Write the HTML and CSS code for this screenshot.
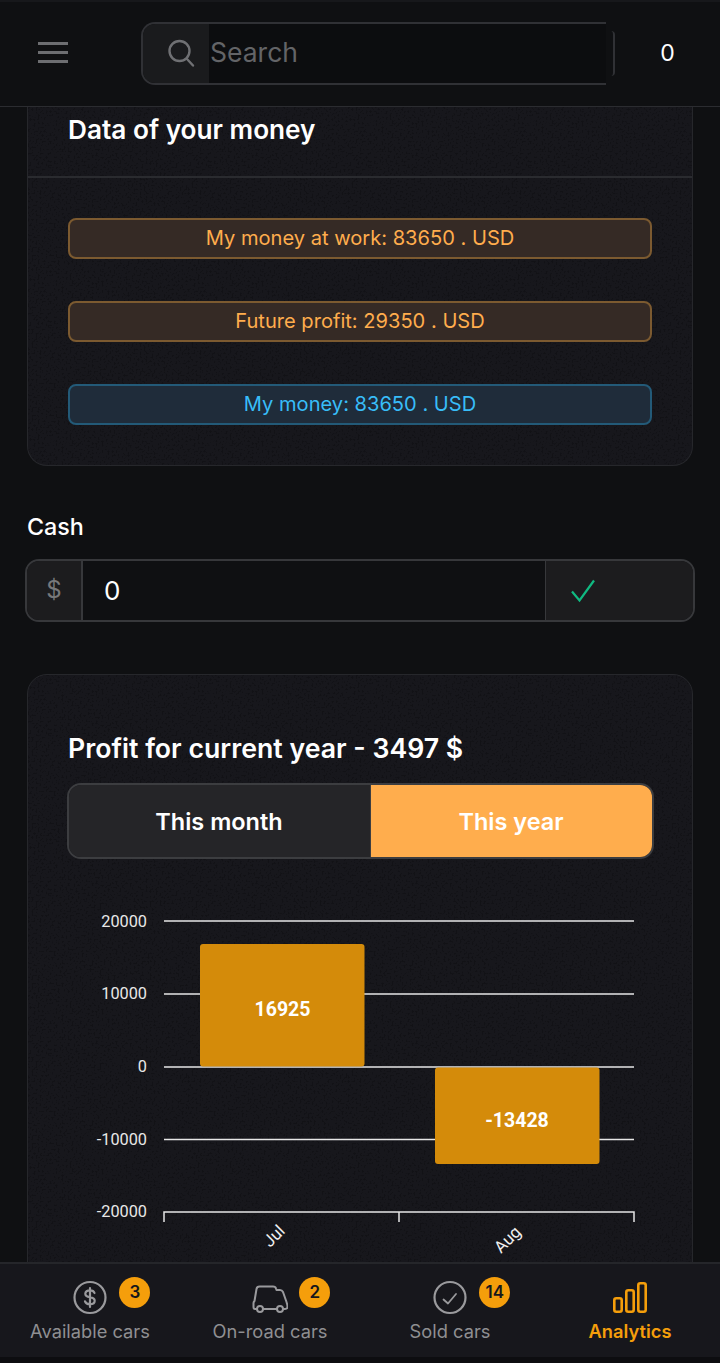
FILE: index.html
```html
<!DOCTYPE html>
<html>
	<head>
		<meta charset="utf-8">
		<title>Analytics</title>
		<link rel="stylesheet" href="styles.css">
	</head>
	<body>
		<div class="topBar">
			<button class="burger" aria-label="Menu">
				<span></span><span></span><span></span>
			</button>
			<div class="search">
				<div class="searchIcon">
					<svg width="30" height="30" viewBox="0 0 30 30" fill="none" stroke="#6f7073" stroke-width="2.4" stroke-linecap="round">
						<circle cx="13.5" cy="13" r="10"/>
						<path d="M21 21l6 6.5"/>
					</svg>
				</div>
				<div class="searchText">Search</div>
			</div>
			<div class="searchEnd"></div>
			<div class="balance">0</div>
		</div>

		<div class="content">
			<!--Money summary, scrolled partly under the top bar-->
			<div class="card moneyCard">
				<h2 class="moneyTitle">Data of your money</h2>
				<div class="pills">
					<div class="pill orange">My money at work: 83650 . USD</div>
					<div class="pill orange">Future profit: 29350 . USD</div>
					<div class="pill blue">My money: 83650 . USD</div>
				</div>
			</div>

			<label class="cashLabel">Cash</label>
			<div class="cashField">
				<div class="cashPrefix">$</div>
				<div class="cashValue">0</div>
				<div class="cashApply">
					<svg width="26" height="24" viewBox="0 0 26 24" fill="none" stroke="#10b981" stroke-width="2.2">
						<path d="M2 12.5l7.5 9L24 1.5"/>
					</svg>
				</div>
			</div>

			<div class="card profitCard">
				<h2 class="profitTitle">Profit for current year - 3497 $</h2>
				<div class="tabs">
					<div class="tab month">This month</div>
					<div class="tab year">This year</div>
				</div>
				<svg class="chart" width="666" height="400" viewBox="27 880 666 400">
					<g class="grid">
						<path d="M164 921H634M164 994H634M164 1067H634M164 1139.500H634"/>
						<path d="M164 1222V1212H634V1222M399 1212V1222"/>
					</g>
					<g class="yLabels">
						<text x="147" y="926.500">20000</text>
						<text x="147" y="999">10000</text>
						<text x="147" y="1072">0</text>
						<text x="147" y="1144.500">-10000</text>
						<text x="147" y="1217">-20000</text>
					</g>
					<rect class="bar" x="200" y="944" width="164.500" height="122.500" rx="3"/>
					<rect class="bar" x="435" y="1067.500" width="164.500" height="96.500" rx="3"/>
					<text class="barLabel" x="282.500" y="1016">16925</text>
					<text class="barLabel" x="517" y="1127">-13428</text>
					<text class="xLabel" transform="translate(286 1232) rotate(-45)">Jul</text>
					<text class="xLabel" transform="translate(522 1233) rotate(-45)">Aug</text>
				</svg>
			</div>
		</div>

		<div class="bottomNav">
			<div class="navItem">
				<div class="navIcon">
					<svg width="36" height="36" viewBox="0 0 36 36" fill="none" stroke="#9a9a9d" stroke-width="2.2">
						<circle cx="18" cy="17.500" r="15.500"/>
						<path stroke-linecap="round" d="M22.500 13c-.6-1.800-2.400-2.700-4.500-2.700-2.800 0-4.700 1.400-4.700 3.400 0 2.100 1.900 3 4.700 3.500s4.700 1.500 4.700 3.600c0 2-2 3.400-4.700 3.400-2.500 0-4.400-1-5-2.900M18 8v19"/>
					</svg>
					<span class="badge">3</span>
				</div>
				<div class="navText">Available cars</div>
			</div>
			<div class="navItem">
				<div class="navIcon">
					<svg width="36" height="36" viewBox="0 0 36 36" fill="none" stroke="#9a9a9d" stroke-width="2" stroke-linejoin="round">
						<path d="M5 29H3Q1.500 29 1.500 27V23Q1.500 22 2.500 21L4.500 9Q5 6.500 7.500 6.500H21Q23.500 6.500 24 8.500L24.500 10H28Q30 10 31 12L34.500 22Q35.500 25 35.500 27Q35.500 29 33 29H31M11 29H25"/>
						<circle cx="8" cy="29" r="3"/>
						<circle cx="28" cy="29" r="3"/>
					</svg>
					<span class="badge">2</span>
				</div>
				<div class="navText">On-road cars</div>
			</div>
			<div class="navItem">
				<div class="navIcon">
					<svg width="36" height="36" viewBox="0 0 36 36" fill="none" stroke="#9a9a9d" stroke-width="2.2">
						<circle cx="18" cy="17.500" r="15.500"/>
						<path stroke-width="1.800" stroke-linecap="round" stroke-linejoin="round" d="M11.500 19.500l4.500 4 8-9.500"/>
					</svg>
					<span class="badge">14</span>
				</div>
				<div class="navText">Sold cars</div>
			</div>
			<div class="navItem active">
				<div class="navIcon">
					<svg width="36" height="36" viewBox="0 0 36 36" fill="none" stroke="#f59e0b" stroke-width="2.600">
						<rect x="2.300" y="18.300" width="7.400" height="13.400" rx="2"/>
						<rect x="14.300" y="10.300" width="7.400" height="21.400" rx="2"/>
						<rect x="26.300" y="3.300" width="7.400" height="28.400" rx="2"/>
					</svg>
				</div>
				<div class="navText">Analytics</div>
			</div>
		</div>
		<div class="bottomStrip"></div>
	</body>
</html>
```

FILE: styles.css
```css
* {
	box-sizing: border-box;
}

html, body {
	margin: 0;
	height: 100%;
}

body {
	display: flex;
	flex-direction: column;
	height: 1363px;
	overflow: hidden;
	font-family: 'Inter', sans-serif;
	background-color: #0f1012;
	color: #fff;
}

/*Top bar*/
.topBar {
	flex: none;
	display: flex;
	align-items: center;
	height: 107px;
	padding-bottom: 2px;
	padding-left: 38px;
	background-color: #0f1012;
	border-top: 2px solid #17181b;
	border-bottom: 1px solid #2b2c30;
}

.burger {
	display: flex;
	flex-direction: column;
	gap: 6px;
	width: 30px;
	margin-top: -2px;
	padding: 0;
	background: none;
	border: none;
}

.burger span {
	display: block;
	height: 3px;
	background-color: #6d6e71;
}

.search {
	display: flex;
	width: 465px;
	height: 63px;
	margin-left: 73px;
	background-color: #0c0d0f;
	border: 2px solid #303135;
	border-right: none;
	border-radius: 14px 0 0 14px;
	overflow: hidden;
}

.searchIcon {
	display: flex;
	align-items: center;
	justify-content: center;
	width: 66px;
	padding-left: 10px;
	background-color: #1a1b1d;
}

.searchText {
	margin-left: 1px;
	margin-top: 12px;
	font-size: 26.500px;
	line-height: 32px;
	color: #636467;
}

/*Right end of the search box, drawn apart from its top and bottom edges*/
.searchEnd {
	width: 9px;
	height: 45px;
	border-right: 2px solid #303135;
	border-radius: 0 4px 4px 0;
}

.balance {
	width: 105px;
	text-align: center;
	font-size: 23px;
}

/*Scrolled content*/
.content {
	flex: 1;
	min-height: 0;
	overflow: hidden;
}

/*Card surface has a faint leather grain*/
.card {
	width: 666px;
	margin-left: 27px;
	background-color: #17171c;
	background-image: url("data:image/svg+xml,%3Csvg xmlns='http://www.w3.org/2000/svg' width='160' height='160'%3E%3Cfilter id='n' color-interpolation-filters='sRGB'%3E%3CfeTurbulence type='fractalNoise' baseFrequency='0.5' numOctaves='2' stitchTiles='stitch'/%3E%3CfeColorMatrix values='0 0 0 0 0.07 0 0 0 0 0.07 0 0 0 0 0.086 0 0 0 -8 3.700'/%3E%3C/filter%3E%3Crect width='160' height='160' filter='url(%23n)'/%3E%3C/svg%3E");
	border: 1.500px solid #26272b;
}

.moneyCard {
	height: 359px;
	border-top: none;
	border-radius: 0 0 20px 20px;
}

.moneyTitle {
	height: 71px;
	margin: 0;
	padding: 8px 0 0 40px;
	font-size: 26.200px;
	line-height: 30px;
	font-weight: 600;
	border-bottom: 2px solid #2a2b2f;
}

.pills {
	display: flex;
	flex-direction: column;
	gap: 42px;
	padding: 40px 40px 0 40px;
}

.pill {
	height: 41px;
	border-radius: 8px;
	text-align: center;
	font-size: 20.100px;
	line-height: 37px;
	border: 2px solid;
}

.orange {
	color: #ffad4d;
	background-color: #352a25;
	border-color: #7c5a30;
}

.blue {
	color: #38bdf8;
	background-color: #1f2c3a;
	border-color: #235a78;
}

.cashLabel {
	display: block;
	margin: 47px 0 0 27px;
	font-size: 23.300px;
	line-height: 28px;
	font-weight: 500;
}

.cashField {
	display: flex;
	width: 670px;
	height: 63px;
	margin: 18px 0 0 25px;
	border: 2px solid #37383b;
	border-radius: 14px;
	overflow: hidden;
}

.cashPrefix {
	width: 56px;
	text-align: center;
	font-size: 24px;
	line-height: 58px;
	color: #77787a;
	background-color: #1c1c1e;
	border-right: 2px solid #37383b;
}

.cashValue {
	flex: 1;
	padding-left: 21px;
	font-size: 26px;
	line-height: 59px;
	background-color: #0f1012;
}

.cashApply {
	display: flex;
	align-items: center;
	width: 148px;
	padding-left: 24px;
	background-color: #1c1c1e;
	border-left: 1px solid #37383b;
}

.profitCard {
	height: 640px;
	margin-top: 52px;
	border-radius: 20px 20px 0 0;
}

.profitTitle {
	margin: 0;
	padding: 56px 0 0 40px;
	font-size: 26.700px;
	line-height: 34px;
	font-weight: 600;
}

.tabs {
	display: flex;
	width: 587px;
	height: 76px;
	margin: 18px 0 0 38.500px;
	border: 2px solid #3c3d40;
	border-radius: 14px;
	overflow: hidden;
}

.tab {
	text-align: center;
	font-size: 23.500px;
	line-height: 73px;
	font-weight: 600;
}

.month {
	width: 302px;
	background-color: #252528;
	border-right: 1px solid #3c3d40;
}

.year {
	flex: 1;
	background-color: #ffad4d;
}

/*Chart, drawn in page coordinates through the viewBox*/
.chart {
	display: block;
	margin: 21px 0 0 -1.500px;
	overflow: hidden;
}

.grid path {
	fill: none;
	stroke: #e6e6e6;
	stroke-width: 1.500;
}

.yLabels text {
	font-family: 'Roboto', sans-serif;
	font-size: 16.300px;
	fill: #e8e8e8;
	text-anchor: end;
}

.bar {
	fill: #d48b0a;
}

.barLabel {
	font-family: 'Roboto', sans-serif;
	font-size: 19.500px;
	font-weight: 700;
	fill: #fff;
	text-anchor: middle;
}

.xLabel {
	font-family: 'Roboto', sans-serif;
	font-size: 16.800px;
	fill: #f0f0f0;
	text-anchor: end;
}

/*Bottom navigation*/
.bottomNav {
	flex: none;
	display: flex;
	height: 95px;
	background-color: #17171c;
	border-top: 2px solid #25262a;
}

.navItem {
	flex: 1;
	display: flex;
	flex-direction: column;
	align-items: center;
	padding-top: 16px;
	font-size: 18.300px;
	color: #8f8f92;
}

.navIcon {
	position: relative;
	width: 36px;
	height: 36px;
}

.navIcon svg {
	display: block;
}

.navText {
	margin-top: 4px;
	line-height: 22px;
}

.active {
	color: #f59e0b;
	font-weight: 600;
}

.badge {
	position: absolute;
	left: 47.300px;
	top: -3px;
	min-width: 31px;
	height: 31px;
	padding: 0 3px;
	border-radius: 16px;
	background-color: #f59e0b;
	color: #17171c;
	font-size: 17px;
	font-weight: 600;
	line-height: 31px;
	text-align: center;
}

.bottomStrip {
	flex: none;
	height: 6px;
	background-color: #0d0d10;
}
```
